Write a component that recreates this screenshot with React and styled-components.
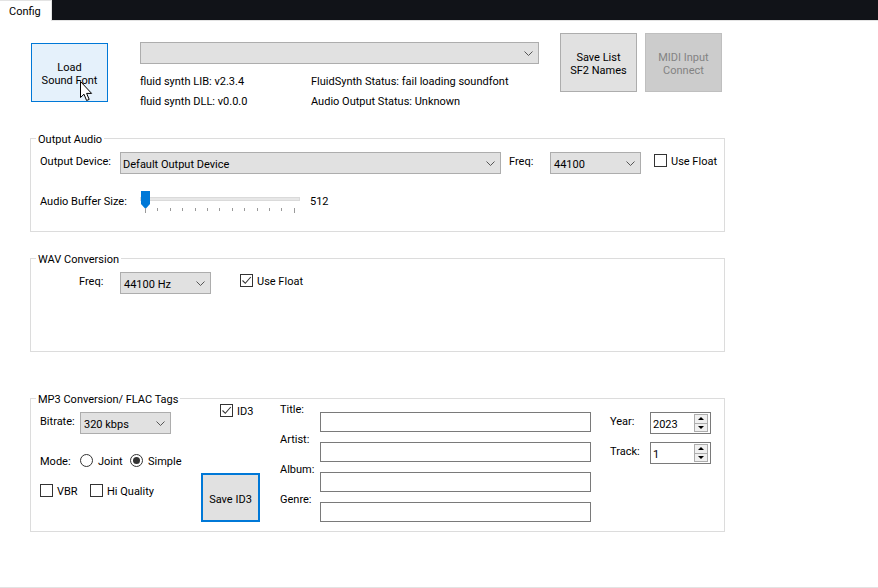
import React from "react";
import styled, { createGlobalStyle } from "styled-components";

const Global = createGlobalStyle`
  html, body { margin: 0; padding: 0; background: #fff; }
  body { width: 878px; height: 588px; overflow: hidden; font-family: Roboto, "Noto Sans", sans-serif; font-size: 11px; color: #000; }
`;

const Window = styled.div`
  width: 878px;
  height: 588px;
  display: flex;
  flex-direction: column;
  border-bottom: 1px solid #e3e3e3;
  box-sizing: border-box;
  padding-bottom: 1px;
`;
const TabStrip = styled.div`
  height: 21px;
  flex: none;
  box-sizing: border-box;
  background: #111318;
  border-bottom: 1px solid #e3e3e3;
  display: flex;
`;
const Tab = styled.div`
  width: 52px;
  height: 21px;
  box-sizing: border-box;
  background: #fff;
  border-top: 1px solid #e3e3e3;
  border-right: 1px solid #e3e3e3;
  padding-left: 9px;
  line-height: 21px;
`;
const Content = styled.div`
  flex: 1;
  display: flex;
  flex-direction: column;
  padding-left: 30px;
  width: 695px;
`;
const TopRow = styled.div`
  height: 117px;
  display: flex;
  align-items: flex-start;
  position: relative;
`;
const Button = styled.div`
  flex: none;
  box-sizing: border-box;
  width: ${p => p.$w || 77}px;
  height: ${p => p.$h || 59}px;
  margin-top: ${p => p.$top || 0}px;
  margin-left: ${p => p.$left || 0}px;
  padding-top: 3px;
  background: ${p => (p.$hover ? "#e5f1fb" : p.$disabled ? "#cccccc" : "#e1e1e1")};
  border: ${p => (p.$focus ? "2px solid #0078d7" : p.$hover ? "1px solid #0078d7" : p.$disabled ? "1px solid #bfbfbf" : "1px solid #adadad")};
  color: ${p => (p.$disabled ? "#838383" : "#000")};
  display: flex;
  align-items: center;
  justify-content: center;
  text-align: center;
  line-height: 13px;
  white-space: pre-line;
`;
const TopMiddle = styled.div`
  width: 399px;
  margin: 21px 0 0 32px;
  flex: none;
`;
const StatusGrid = styled.div`
  display: grid;
  grid-template-columns: 171px 1fr;
  grid-auto-rows: 20px;
  margin-top: 8px;
  line-height: 20px;
  white-space: nowrap;
`;
const Select = styled.div`
  box-sizing: border-box;
  flex: none;
  width: ${p => p.$w}px;
  height: 22px;
  background: #e1e1e1;
  border: 1px solid #adadad;
  display: flex;
  align-items: center;
  justify-content: space-between;
  padding: 2px 5px 0 ${p => p.$pl ?? 3}px;
  white-space: nowrap;
`;
const Chevron = styled.svg`
  width: 9px;
  height: 5px;
  margin-top: -2px;
  flex: none;
`;
const Group = styled.section`
  position: relative;
  box-sizing: border-box;
  height: ${p => p.$h}px;
  margin-bottom: ${p => p.$mb}px;
  border: 1px solid #dcdcdc;
  padding: ${p => p.$pad || "13px 0 0 9px"};
`;
const Legend = styled.div`
  position: absolute;
  left: 5px;
  top: -6px;
  padding: 0 2px;
  line-height: 13px;
  background: #fff;
  white-space: nowrap;
`;
const Row = styled.div`
  display: flex;
  align-items: flex-start;
  margin-top: ${p => p.$top || 0}px;
`;
const Label = styled.div`
  flex: none;
  width: ${p => (p.$w ? `${p.$w}px` : "auto")};
  margin-left: ${p => p.$left || 0}px;
  margin-top: ${p => p.$top || 0}px;
  padding-top: 1px;
  line-height: 15px;
  white-space: nowrap;
`;
const Check = styled.div`
  display: flex;
  align-items: center;
  flex: none;
  gap: 4px;
  width: ${p => (p.$w ? `${p.$w}px` : "auto")};
  margin-left: ${p => p.$left || 0}px;
  margin-top: ${p => p.$top || 0}px;
  line-height: 13px;
  white-space: nowrap;
  & > span { position: relative; top: 1px; }
`;
const Box = styled.div`
  width: 13px;
  height: 13px;
  box-sizing: border-box;
  border: 1px solid #333;
  background: #fff;
  flex: none;
  display: flex;
`;
const Radio = styled(Box)`
  border-radius: 50%;
  margin-right: 1px;
  align-items: center;
  justify-content: center;
  &::after {
    content: "";
    display: ${p => (p.$on ? "block" : "none")};
    width: 7px;
    height: 7px;
    border-radius: 50%;
    background: #333;
  }
`;
const Slider = styled.div`
  position: relative;
  width: 160px;
  height: 24px;
  margin-top: -1px;
  flex: none;
`;
const Track = styled.div`
  position: absolute;
  left: 0;
  top: 6px;
  width: 160px;
  height: 4px;
  box-sizing: border-box;
  background: #e7e7e7;
  border: 1px solid #dadada;
`;
const Ticks = styled.div`
  position: absolute;
  left: 5px;
  top: 17px;
  width: 150px;
  display: flex;
  justify-content: space-between;
`;
const Tick = styled.div`
  width: 1px;
  height: ${p => (p.$end ? 5 : 3)}px;
  background: #9a9a9a;
`;
const Thumb = styled.svg`
  position: absolute;
  left: 1px;
  top: 0;
  width: 9px;
  height: 18px;
`;
const Mp3Row = styled.div`
  display: flex;
  height: 100%;
`;
const Mp3Left = styled.div`
  width: 161px;
  flex: none;
`;
const Mp3Mid = styled.div`
  width: 59px;
  flex: none;
  display: flex;
  flex-direction: column;
`;
const TagLabels = styled.div`
  width: 40px;
  margin-left: 20px;
  margin-top: 2px;
  flex: none;
  display: flex;
  flex-direction: column;
  gap: 14px;
`;
const TagInputs = styled.div`
  width: 271px;
  flex: none;
  margin-top: 13px;
  display: flex;
  flex-direction: column;
  gap: 10px;
`;
const TextInput = styled.div`
  box-sizing: border-box;
  height: 20px;
  background: #fff;
  border: 1px solid #7a7a7a;
`;
const YearCol = styled.div`
  margin-left: 19px;
  margin-top: 13px;
  flex: none;
  display: flex;
  flex-direction: column;
  gap: 8px;
`;
const Spin = styled.div`
  box-sizing: border-box;
  width: 61px;
  height: 22px;
  border: 1px solid #7a7a7a;
  background: #fff;
  display: flex;
  align-items: center;
  justify-content: space-between;
  padding: 2px 2px 0 2px;
`;
const SpinButtons = styled.div`
  display: flex;
  flex-direction: column;
  width: 14px;
  height: 18px;
  margin-top: -2px;
`;
const SpinButton = styled.div`
  flex: 1;
  box-sizing: border-box;
  background: #f0f0f0;
  border: 1px solid #adadad;
  display: flex;
  align-items: center;
  justify-content: center;
  & + & { border-top: none; }
`;
const Arrow = styled.div`
  width: 0;
  height: 0;
  border-left: 3px solid transparent;
  border-right: 3px solid transparent;
  ${p => (p.$down ? "border-top: 3px solid #000;" : "border-bottom: 3px solid #000;")}
`;
const Cursor = styled.svg`
  position: absolute;
  left: 50px;
  top: 60px;
  width: 14px;
  height: 21px;
`;

const Chev = () => (
  <Chevron viewBox="0 0 9 5">
    <polyline points="0.5,0.5 4.5,4.5 8.5,0.5" fill="none" stroke="#555" strokeWidth="1" />
  </Chevron>
);
const Combo = ({ w, pl, children }) => (
  <Select $w={w} $pl={pl}>
    <span>{children}</span>
    <Chev />
  </Select>
);
const Tickmark = () => (
  <svg width="11" height="11" viewBox="0 0 11 11">
    <polyline points="1.5,5.5 4.3,8.3 9.8,2" fill="none" stroke="#333" strokeWidth="1.1" />
  </svg>
);
const Spinner = ({ value }) => (
  <Spin>
    <span>{value}</span>
    <SpinButtons>
      <SpinButton><Arrow /></SpinButton>
      <SpinButton><Arrow $down /></SpinButton>
    </SpinButtons>
  </Spin>
);

export default function App() {
  return (
    <Window>
      <Global />
      <TabStrip><Tab>Config</Tab></TabStrip>
      <Content>
        <TopRow>
          <Button $top={22} $left={1} $hover>{"Load\nSound Font"}</Button>
          <TopMiddle>
            <Combo w={399} />
            <StatusGrid>
              <span>fluid synth LIB: v2.3.4</span>
              <span>FluidSynth Status: fail loading soundfont</span>
              <span>fluid synth DLL: v0.0.0</span>
              <span>Audio Output Status: Unknown</span>
            </StatusGrid>
          </TopMiddle>
          <Button $top={12} $left={21}>{"Save List\nSF2 Names"}</Button>
          <Button $top={12} $left={8} $disabled>{"MIDI Input\nConnect"}</Button>
          <Cursor viewBox="0 0 14 21">
            <path d="M0.5 0.5 L0.5 16.5 L4 13.2 L6.6 19.5 L9.2 18.4 L6.6 12.4 L11.6 12.4 Z" fill="#fff" stroke="#000" strokeWidth="1" />
          </Cursor>
        </TopRow>

        <Group $h={94} $mb={26}>
          <Legend>Output Audio</Legend>
          <Row>
            <Label $w={80} $top={1}>Output Device:</Label>
            <Combo w={381} pl={2}>Default Output Device</Combo>
            <Label $left={8} $top={1} $w={41}>Freq:</Label>
            <Combo w={91}>44100</Combo>
            <Check $left={13} $top={2}><Box /><span>Use Float</span></Check>
          </Row>
          <Row $top={18}>
            <Label $w={100} $top={1}>Audio Buffer Size:</Label>
            <Slider>
              <Track />
              <Thumb viewBox="0 0 9 18">
                <path d="M0 0 H9 V13 L4.5 18 L0 13 Z" fill="#0078d7" />
              </Thumb>
              <Ticks>
                {Array.from({ length: 13 }, (_, i) => <Tick key={i} $end={i === 0 || i === 12} />)}
              </Ticks>
            </Slider>
            <Label $left={10} $top={1}>512</Label>
          </Row>
        </Group>

        <Group $h={94} $mb={46}>
          <Legend>WAV Conversion</Legend>
          <Row>
            <Label $left={39} $w={41} $top={1}>Freq:</Label>
            <Combo w={91}>44100 Hz</Combo>
            <Check $left={29} $top={2}>
              <Box><Tickmark /></Box><span>Use Float</span>
            </Check>
          </Row>
        </Group>

        <Group $h={134} $mb={0} $pad="0 0 0 9px">
          <Legend>MP3 Conversion/ FLAC Tags</Legend>
          <Mp3Row>
            <Mp3Left>
              <Row $top={13}>
                <Label $w={40} $top={1}>Bitrate:</Label>
                <Combo w={91}>320 kbps</Combo>
              </Row>
              <Row $top={19}>
                <Label $w={40}>Mode:</Label>
                <Check $w={50} $top={1}><Radio /><span>Joint</span></Check>
                <Check $top={1}><Radio $on /><span>Simple</span></Check>
              </Row>
              <Row $top={15}>
                <Check $w={50}><Box /><span>VBR</span></Check>
                <Check><Box /><span>Hi Quality</span></Check>
              </Row>
            </Mp3Left>
            <Mp3Mid>
              <Check $left={19} $top={5}>
                <Box><Tickmark /></Box><span>ID3</span>
              </Check>
              <Button $w={59} $h={49} $top={56} $focus>Save ID3</Button>
            </Mp3Mid>
            <TagLabels>
              <Label>Title:</Label>
              <Label>Artist:</Label>
              <Label>Album:</Label>
              <Label>Genre:</Label>
            </TagLabels>
            <TagInputs>
              <TextInput /><TextInput /><TextInput /><TextInput />
            </TagInputs>
            <YearCol>
              <Row>
                <Label $w={40} $top={1}>Year:</Label>
                <Spinner value="2023" />
              </Row>
              <Row>
                <Label $w={40} $top={1}>Track:</Label>
                <Spinner value="1" />
              </Row>
            </YearCol>
          </Mp3Row>
        </Group>
      </Content>
    </Window>
  );
}
